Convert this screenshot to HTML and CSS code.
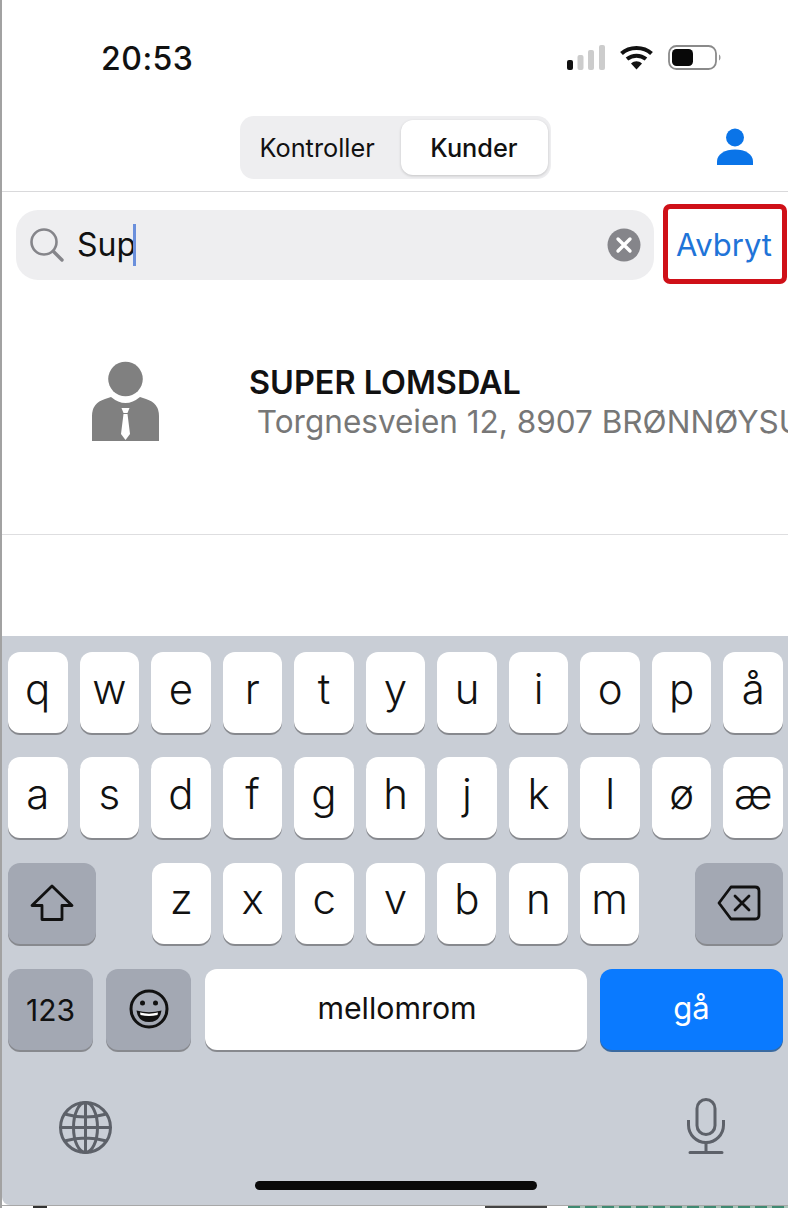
FILE: index.html
```html
<!DOCTYPE html>
<html lang="no">
<head>
<meta charset="utf-8">
<title>Kunder</title>
<link rel="stylesheet" href="styles.css">
</head>
<body>
<div class="phone">
  <div class="status">
    <span class="time">20:53</span>
    <div class="status-icons">
      <svg class="signal" width="38" height="25" viewBox="0 0 38 25"><rect x="0" y="15" width="6" height="10" rx="2" fill="#111"/><rect x="10.500" y="10" width="6" height="15" rx="2" fill="#ccc"/><rect x="21" y="5" width="6" height="20" rx="2" fill="#ccc"/><rect x="32" y="0" width="6" height="25" rx="2" fill="#ccc"/></svg>
      <svg class="wifi" width="33" height="25" viewBox="0 0 33 25"><path d="M1.500 8.500C9.500 1 23.500 1 31.500 8.500" fill="none" stroke="#111" stroke-width="4"/><path d="M7 14C12.500 9.500 20.500 9.500 26 14" fill="none" stroke="#111" stroke-width="4"/><path d="M11 18.500C14.500 15.500 18.500 15.500 22 18.500L16.500 24.500Z" fill="#111"/></svg>
      <svg class="battery" width="54" height="25" viewBox="0 0 54 25"><rect x="1" y="1" width="47" height="23" rx="7.500" fill="#fff" stroke="#8a8a8a" stroke-width="1.800"/><rect x="4" y="4" width="21" height="17" rx="4.500" fill="#080808"/><path d="M51 9.500c2 .8 2 5.200 0 6z" fill="#999"/></svg>
    </div>
  </div>

  <header class="nav">
    <div class="segment">
      <span class="seg seg-off">Kontroller</span>
      <span class="seg seg-on">Kunder</span>
    </div>
    <svg class="person" width="36" height="37" viewBox="0 0 36 37"><circle cx="18" cy="9.500" r="9" fill="#0a74e8"/><path d="M0 37v-3.500C0 26 8 21.500 18 21.500S36 26 36 33.500V37Z" fill="#0a74e8"/></svg>
  </header>

  <div class="search-row">
    <div class="search">
      <svg class="glass" width="34" height="34" viewBox="0 0 34 34"><circle cx="14" cy="14" r="12.500" fill="none" stroke="#85858a" stroke-width="2.600"/><path d="M23.500 23.500L32 32" stroke="#85858a" stroke-width="3.400" stroke-linecap="round"/></svg>
      <span class="query">Sup</span><span class="caret"></span>
      <svg class="clear" width="34" height="34" viewBox="0 0 34 34"><circle cx="17" cy="17" r="16.500" fill="#85858a"/><path d="M11 11L23 23M23 11L11 23" stroke="#fff" stroke-width="3.400" stroke-linecap="round"/></svg>
    </div>
    <div class="cancel">Avbryt</div>
  </div>

  <div class="result">
    <svg class="avatar" width="69" height="80" viewBox="0 0 69 80"><circle cx="34.500" cy="18" r="17.300" fill="#808080"/><path d="M1 80V55Q1 42 14 38L20 36Q34.500 48 49 36L55 38Q68 42 68 55V80Z" fill="#808080"/><path d="M30.500 47H38.500L36.500 52H32.500Z" fill="#fff"/><path d="M32.500 53H36.500L39 73L34.500 79L30 73Z" fill="#fff"/></svg>
    <div class="result-text">
      <div class="name">SUPER LOMSDAL</div>
      <div class="address"> Torgnesveien 12, 8907 BRØNNØYSUND</div>
    </div>
  </div>

  <div class="spacer"></div>

  <div class="keyboard">
    <div class="row grid-row">
      <span class="key">q</span><span class="key">w</span><span class="key">e</span><span class="key">r</span><span class="key">t</span><span class="key">y</span><span class="key">u</span><span class="key">i</span><span class="key">o</span><span class="key">p</span><span class="key">å</span>
    </div>
    <div class="row grid-row">
      <span class="key">a</span><span class="key">s</span><span class="key">d</span><span class="key">f</span><span class="key">g</span><span class="key">h</span><span class="key">j</span><span class="key">k</span><span class="key">l</span><span class="key">ø</span><span class="key">æ</span>
    </div>
    <div class="row split-row">
      <span class="key fn wide">
        <svg width="44" height="38" viewBox="0 0 44 38"><path d="M22 2L42 21.500H32V35.500H12V21.500H2Z" fill="none" stroke="#111" stroke-width="2.800" stroke-linejoin="round"/></svg>
      </span>
      <div class="letters">
        <span class="key">z</span><span class="key">x</span><span class="key">c</span><span class="key">v</span><span class="key">b</span><span class="key">n</span><span class="key">m</span>
      </div>
      <span class="key fn wide">
        <svg width="44" height="36" viewBox="0 0 44 36"><path d="M14 2H38Q42 2 42 6V30Q42 34 38 34H14L2 18Z" fill="none" stroke="#111" stroke-width="2.800" stroke-linejoin="round"/><path d="M18 11L32 25M32 11L18 25" stroke="#111" stroke-width="2.800" stroke-linecap="round"/></svg>
      </span>
    </div>
    <div class="row bottom-row">
      <span class="key fn num">123</span>
      <span class="key fn emoji">
        <svg width="40" height="40" viewBox="0 0 40 40"><circle cx="20" cy="20" r="18" fill="none" stroke="#111" stroke-width="3"/><circle cx="13.500" cy="14" r="2.500" fill="#111"/><circle cx="26.500" cy="14" r="2.500" fill="#111"/><path d="M7.500 21.500Q20 25 32.500 21.500Q31 33 20 33Q9 33 7.500 21.500Z" fill="#111"/><path d="M11 23.500Q20 25.800 29 23.500L28.500 26Q20 27.800 11.500 26Z" fill="#fff"/></svg>
      </span>
      <span class="key space">mellomrom</span>
      <span class="key go">gå</span>
    </div>
    <div class="tools">
      <svg class="globe" width="53" height="53" viewBox="0 0 53 53"><g fill="none" stroke="#5d6169" stroke-width="3"><circle cx="26.500" cy="26.500" r="25"/><ellipse cx="26.500" cy="26.500" rx="12" ry="25"/><path d="M26.500 1.500V51.500M1.500 26.500H51.500M5.500 13Q26.500 19 47.500 13M5.500 40Q26.500 34 47.500 40"/></g></svg>
      <svg class="mic" width="38" height="56" viewBox="0 0 38 56"><g fill="none" stroke="#5d6169" stroke-width="3"><rect x="10" y="1.500" width="18" height="35" rx="9"/><path d="M1.500 22V27A17.500 17.500 0 0 0 36.500 27V22"/><path d="M19 44.500V54M3 54.500H35" stroke-linecap="round"/></g></svg>
    </div>
    <div class="home"></div>
  </div>

  <div class="peek">
    <span class="peek-a"></span>
    <span class="peek-b"></span>
    <span class="peek-c"></span>
  </div>
</div>
</body>
</html>
```
FILE: styles.css
```css
* { box-sizing: border-box; }
html, body { margin: 0; padding: 0; background: #fff; }
body { width: 788px; height: 1208px; overflow: hidden; font-family: Inter, "Liberation Sans", sans-serif; color: #111; }

.phone { width: 788px; height: 1208px; border-left: 2px solid #a2a2a2; display: flex; flex-direction: column; overflow: hidden; }

.status { height: 116px; flex: none; display: flex; justify-content: space-between; align-items: flex-start; padding: 45px 66px 0 99px; }
.time { font-size: 32px; font-weight: 500; line-height: 26px; letter-spacing: .5px; margin-top: 1px; }
.status-icons { display: flex; gap: 15px; }
.status-icons svg { display: block; }

.nav { height: 76px; flex: none; display: flex; justify-content: center; align-items: flex-start; position: relative; border-bottom: 1.500px solid #d9d9db; }
.segment { width: 311px; height: 63px; background: #eeeef0; border-radius: 14px; display: flex; align-items: center; padding: 0 3px 0 0; justify-content: space-between; }
.seg { font-size: 25.300px; line-height: 32px; color: #111; }
.seg-off { padding-left: 20px; }
.seg-on { width: 147px; height: 55px; background: #fff; border-radius: 12px; display: flex; align-items: center; justify-content: center; font-weight: 500; box-shadow: 0 1px 3px rgba(0, 0, 0, .18); }
.person { position: absolute; right: 35px; top: 12px; }

.search-row { flex: none; height: 80px; margin-top: 12px; padding-left: 14px; padding-right: 1px; display: flex; align-items: center; gap: 9px; }
.search { width: 638px; height: 70px; margin-top: 2px; background: #eeeef0; border-radius: 22px; display: flex; align-items: center; padding: 0 13px 0 14px; }
.glass { flex: none; margin-right: 13px; }
.query { font-size: 32px; line-height: 40px; }
.caret { width: 3px; height: 42px; background: #6a8fdc; margin-left: -3px; }
.clear { margin-left: auto; }
.cancel { width: 124px; height: 80px; border: 5px solid #cf1018; border-radius: 7px; padding-right: 2px; display: flex; align-items: center; justify-content: center; color: #1f74d8; font-size: 31px; }

.result { flex: none; height: 251px; border-bottom: 1.500px solid #dedee0; display: flex; align-items: flex-start; padding-top: 77px; overflow: hidden; }
.avatar { flex: none; margin-left: 89px; }
.result-text { margin-left: 89px; margin-top: 4px; }
.name { font-size: 32.400px; line-height: 36px; font-weight: 600; color: #111; white-space: pre; }
.address { font-size: 31.500px; line-height: 40px; color: #777; margin-top: 1px; margin-left: -1px; white-space: pre; }

.spacer { flex: none; height: 101px; }

.keyboard { flex: none; height: 569px; background: #c9ced6; padding: 16px 5px 0 6px; border-bottom-left-radius: 8px; display: flex; flex-direction: column; gap: 22.400px; position: relative; }
.row { height: 83px; flex: none; }
.grid-row { display: grid; grid-template-columns: repeat(11, 1fr); column-gap: 12px; }
.split-row { display: flex; justify-content: space-between; }
.letters { display: grid; grid-template-columns: repeat(7, 59.200px); column-gap: 12.200px; }
.bottom-row { display: flex; gap: 13px; margin-top: .8px; }

.key { background: #fff; border-radius: 12px; box-shadow: 0 2px 0 #87898e; display: flex; align-items: center; justify-content: center; font-size: 42px; font-weight: 300; color: #111; height: 81px; padding-bottom: 9px; }
.key svg { display: block; }
.fn { background: #a3a8b3; padding-bottom: 0; }
.wide { width: 88px; }
.num { width: 85px; font-size: 30px; font-weight: 400; padding-top: 2px; }
.emoji { width: 85px; }
.space { flex: 1; margin-left: 1px; font-size: 30.300px; font-weight: 400; padding: 0 0 3px 2px; }
.go { width: 183px; background: #0a7aff; color: #fff; font-size: 31px; font-weight: 400; padding-bottom: 3px; box-shadow: 0 2px 0 #3a6aa0; }

.tools { display: flex; justify-content: space-between; align-items: center; padding: 0 58px 0 51px; margin-top: 27px; }
.mic { margin-top: -3px; }
.home { position: absolute; left: 253px; top: 545px; width: 282px; height: 9px; border-radius: 5px; background: #0a0a0a; }

.peek { flex: none; height: 3px; border-top: 1px solid #a8a8a8; position: relative; overflow: hidden; display: flex; }
.peek-a { width: 14px; height: 2px; margin-left: 31px; background: #333; }
.peek-b { width: 62px; height: 2px; margin-left: 438px; background: #444; }
.peek-c { width: 220px; height: 2px; margin-left: 21px; background: repeating-linear-gradient(90deg, #3f8a72 0 12px, #a9c4b9 12px 17px); }
```
